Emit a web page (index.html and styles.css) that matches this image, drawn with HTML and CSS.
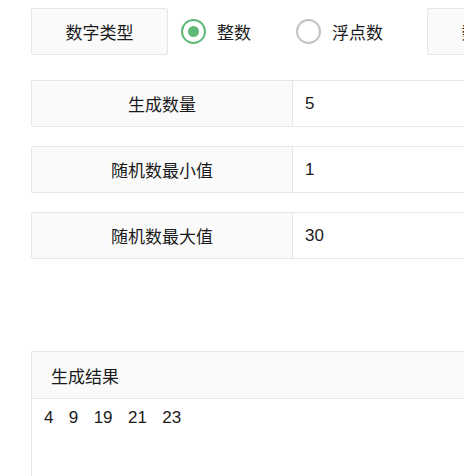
FILE: index.html
```html
<!DOCTYPE html>
<html lang="zh">
<head>
<meta charset="utf-8">
<link rel="stylesheet" href="styles.css">
</head>
<body>
<div class="page">
  <div class="type-row">
    <div class="pane-label">数字类型</div>
    <div class="radios">
      <label class="radio checked"><span class="ring"><span class="dot"></span></span><span class="radio-text">整数</span></label>
      <label class="radio"><span class="ring"></span><span class="radio-text">浮点数</span></label>
    </div>
    <div class="pane-label">数字位数</div>
  </div>

  <div class="field">
    <div class="field-label">生成数量</div>
    <div class="field-value">5</div>
  </div>
  <div class="field">
    <div class="field-label">随机数最小值</div>
    <div class="field-value">1</div>
  </div>
  <div class="field">
    <div class="field-label">随机数最大值</div>
    <div class="field-value">30</div>
  </div>

  <div class="card">
    <div class="card-header">生成结果</div>
    <div class="card-body">4   9   19   21   23   </div>
  </div>
</div>
</body>
</html>
```

FILE: styles.css
```css
html, body {
  margin: 0;
  padding: 0;
  background: #fff;
  overflow: hidden;
}
body {
  font-family: "Liberation Sans", "Noto Sans CJK SC", sans-serif;
  font-size: 17px;
  color: #1a1a1a;
}
.page {
  padding: 8px 0 0 31px;
  width: 700px;
}
.type-row {
  display: flex;
  align-items: center;
  height: 47px;
}
.pane-label {
  box-sizing: border-box;
  width: 137px;
  height: 47px;
  flex: none;
  border: 1px solid #e6e6e6;
  border-radius: 2px;
  background: #fafafa;
  display: flex;
  align-items: center;
  justify-content: center;
}
.radios {
  display: flex;
  align-items: center;
  padding-left: 13px;
  padding-right: 44px;
}
.radio {
  display: flex;
  align-items: center;
  margin-right: 45px;
}
.radio:last-child { margin-right: 0; }
.ring {
  box-sizing: border-box;
  width: 25px;
  height: 25px;
  border-radius: 50%;
  border: 2px solid #c2c2c2;
  display: flex;
  align-items: center;
  justify-content: center;
}
.radio.checked .ring { border-color: #5fb878; }
.dot {
  width: 11px;
  height: 11px;
  border-radius: 50%;
  background: #5fb878;
}
.radio-text {
  margin-left: 11px;
}
.field {
  display: flex;
  box-sizing: border-box;
  height: 47px;
  margin-top: 19px;
  border: 1px solid #e6e6e6;
  border-radius: 2px;
  width: 640px;
}
.type-row + .field { margin-top: 25px; }
.field-label {
  box-sizing: border-box;
  width: 261px;
  flex: none;
  background: #fafafa;
  border-right: 1px solid #e6e6e6;
  display: flex;
  align-items: center;
  justify-content: center;
}
.field-value {
  display: flex;
  align-items: center;
  padding-left: 12px;
}
.card {
  margin-top: 92px;
  border: 1px solid #e6e6e6;
  border-radius: 2px;
  width: 640px;
  height: 200px;
}
.card-header {
  box-sizing: border-box;
  height: 47px;
  background: #fafafa;
  border-bottom: 1px solid #e6e6e6;
  display: flex;
  align-items: center;
  padding-left: 19px;
}
.card-body {
  padding: 8px 12px;
  white-space: pre;
  line-height: 22px;
  word-spacing: 0.4px;
}
```
